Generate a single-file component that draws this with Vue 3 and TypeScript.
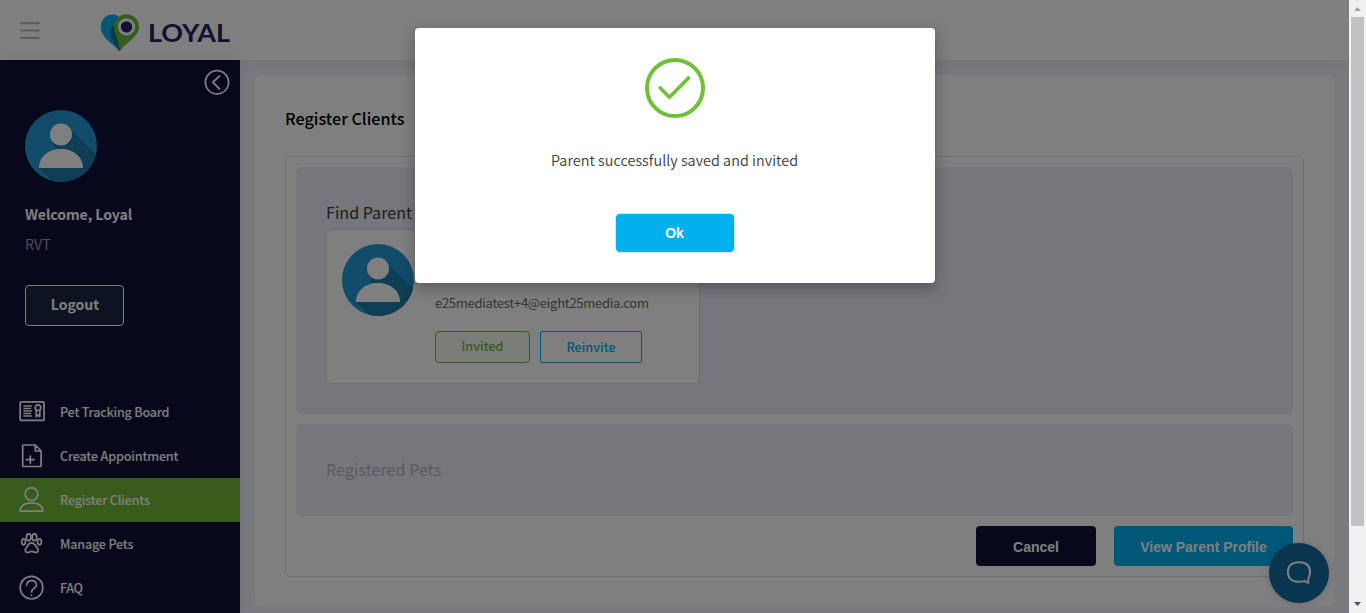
<script setup lang="ts">
import { ref } from 'vue'

interface NavItem {
  icon: 'board' | 'create' | 'client' | 'paw' | 'faq'
  label: string
  width: number
}

const navItems: NavItem[] = [
  { icon: 'board', label: 'Pet Tracking Board', width: 109.5 },
  { icon: 'create', label: 'Create Appointment', width: 118.5 },
  { icon: 'client', label: 'Register Clients', width: 90 },
  { icon: 'paw', label: 'Manage Pets', width: 73.5 },
  { icon: 'faq', label: 'FAQ', width: 23 },
]

const active = ref('Register Clients')
const showModal = ref(true)
</script>

<template>
  <div class="window">
    <div class="page">
      <header class="header">
        <svg class="burger" width="20" height="18" viewBox="0 0 20 18" fill="none" stroke="#a5c3c3" stroke-width="2.200" stroke-linecap="round">
          <path d="M1.200 1.200H18.800M1.200 8.500H18.800M1.200 15.800H18.800" />
        </svg>
        <svg class="logo" width="132" height="40" viewBox="0 0 132 40">
          <path d="M19.500 38.500C14 31 .8 25.500 .8 13.500C.8 6 6.400 1.400 12.700 1.400C16 1.400 18.500 2.800 20 4.500L24 20Z" fill="#00aeef" />
          <path d="M19.800 38.500C14.500 29 9 25 10 19C10.800 15.500 12.500 14 14.500 12L22 26Z" fill="#0077a0" />
          <path d="M19.800 38.500C18.500 25 14 21 14 13.800A12.500 12.500 0 0 1 39 13.800C39 24 26 29 19.800 38.500Z" fill="#70b938" />
          <circle cx="26.500" cy="13.900" r="8.600" fill="#fff" />
          <circle cx="26.500" cy="13.900" r="5.700" fill="#262262" />
          <text x="48" y="29" textLength="82" lengthAdjust="spacingAndGlyphs" class="wordmark">LOYAL</text>
        </svg>
      </header>

      <div class="body">
        <aside class="sidebar">
          <svg class="collapse" width="26" height="26" viewBox="0 0 26 26" fill="none" stroke="#fff" stroke-linecap="round" stroke-linejoin="round">
            <circle cx="13" cy="13.300" r="11.600" stroke-width="1.700" />
            <path d="M15.500 7.100L8.800 13.300L15.500 19.900" stroke-width="1.900" />
          </svg>
          <svg class="avatar" width="72" height="72" viewBox="0 0 72 72">
            <circle cx="36" cy="36" r="36" fill="#2398d4" />
            <path d="M47 21L71 45A36 36 0 0 1 27 70.800L14 58L30 40L28 33Z" fill="#1c7aac" />
            <circle cx="36" cy="24.500" r="11" fill="#fff" />
            <path d="M14 58C14 47 23 39 36 39S58 47 58 58Z" fill="#fff" />
          </svg>
          <div class="welcome">Welcome, Loyal</div>
          <div class="role">RVT</div>
          <button class="logout" type="button">Logout</button>

          <nav class="nav">
            <a v-for="item in navItems" :key="item.label" class="nav-item" :class="{ active: item.label === active }" @click="active = item.label">
              <svg class="nav-icon" width="26" height="26" viewBox="0 0 26 26" fill="none" stroke="#fff" stroke-width="1.700" stroke-linecap="round" stroke-linejoin="round">
                <template v-if="item.icon === 'board'">
                  <rect x="1.200" y="2.900" width="23.800" height="18.500" rx="1" />
                  <path d="M5 6.900H12.500M5 9.400H11.500M5 11.900H12.500M5 14.400H11.500M5 16.900H12.500" stroke-width="1.500" />
                  <circle cx="19" cy="8.700" r="2.800" />
                  <path d="M17.200 11.500V17.600L19 16L20.800 17.600V11.500" />
                </template>
                <template v-else-if="item.icon === 'create'">
                  <path d="M16.300 2H4.500Q3.700 2 3.700 2.800V22.700Q3.700 23.500 4.500 23.500H21.300Q22.100 23.500 22.100 22.700V8ZM16.300 2V8H22.100" />
                  <path d="M11.300 13V20.500M7.500 16.700H15" />
                </template>
                <template v-else-if="item.icon === 'client'">
                  <circle cx="12.500" cy="7.100" r="6.400" />
                  <path d="M1.500 24.200Q1 24.200 1.100 23.300C1.900 18.800 6 15.800 12.500 15.800S23.200 18.800 23.900 23.300Q24 24.200 23.500 24.200Z" />
                </template>
                <template v-else-if="item.icon === 'paw'">
                  <ellipse cx="9.700" cy="6.300" rx="2.300" ry="3.400" />
                  <ellipse cx="15.500" cy="6.300" rx="2.300" ry="3.400" />
                  <ellipse cx="4.600" cy="10.800" rx="1.900" ry="3" />
                  <ellipse cx="20.500" cy="10.800" rx="1.900" ry="3" />
                  <path d="M12.600 11.800C9.500 11.800 9 14.300 7.500 16.500C5.500 18.500 6 21.500 8.300 21.500C10 21.500 10.800 20.300 12.600 20.300S15.500 21.500 17 21.500C19.500 21.500 20 18.500 17.800 16.500C16.300 14.300 15.800 11.800 12.600 11.800Z" />
                </template>
                <template v-else>
                  <circle cx="12.500" cy="12.700" r="11.300" />
                  <path d="M7.700 10C7.700 4.200 17.500 4.200 17.500 10C17.500 13.500 12.600 13 12.600 17M12.600 20.200V20.400" />
                </template>
              </svg>
              <svg class="nav-label" :width="item.width + 2" height="20">
                <text x="0" y="14" :textLength="item.width">{{ item.label }}</text>
              </svg>
            </a>
          </nav>
        </aside>

        <main class="main">
          <section class="panel">
            <h1 class="title">Register Clients</h1>
            <div class="box">
              <div class="find">
                <div class="find-title">Find Parent</div>
                <div class="parent">
                  <svg class="parent-avatar" width="72" height="72" viewBox="0 0 72 72">
                    <circle cx="36" cy="36" r="36" fill="#2398d4" />
                    <path d="M47 21L71 45A36 36 0 0 1 27 70.800L14 58L30 40L28 33Z" fill="#1c7aac" />
                    <circle cx="36" cy="24.500" r="11" fill="#fff" />
                    <path d="M14 58C14 47 23 39 36 39S58 47 58 58Z" fill="#fff" />
                  </svg>
                  <div class="parent-info">
                    <svg class="email" width="216" height="20">
                      <text x="0" y="14" textLength="214">e25mediatest+4@eight25media.com</text>
                    </svg>
                    <div class="actions">
                      <span class="invited">Invited</span>
                      <button class="reinvite" type="button">Reinvite</button>
                    </div>
                  </div>
                </div>
              </div>
              <div class="pets">Registered Pets</div>
              <div class="footer">
                <button class="btn cancel" type="button">Cancel</button>
                <button class="btn view" type="button">View Parent Profile</button>
              </div>
            </div>
          </section>
        </main>
      </div>

      <div class="chat">
        <svg width="26" height="26" viewBox="0 0 26 26" fill="none" stroke="#fff" stroke-width="2" stroke-linejoin="round">
          <path d="M22.300 22.800V18.500C23.800 16.500 24 14.500 24 12C24 5.500 20 2.200 13 2.200S1.900 5.800 1.900 12S6 21.800 13 21.800C15 21.800 17 21.500 18.500 20.800Q20 22.600 22.300 22.800Z" />
        </svg>
      </div>

      <div v-if="showModal" class="overlay">
        <div class="modal">
          <svg class="check" width="60" height="60" viewBox="0 0 60 60" fill="none" stroke="#70bf3a" stroke-linecap="round" stroke-linejoin="round">
            <circle cx="30" cy="30" r="28" stroke-width="4" />
            <path d="M15.200 30L24.500 39.300L43.500 20" stroke-width="3.700" />
          </svg>
          <svg class="message" width="250" height="24">
            <text x="1" y="17" textLength="247">Parent successfully saved and invited</text>
          </svg>
          <button class="ok" type="button" @click="showModal = false">Ok</button>
        </div>
      </div>
    </div>

    <div class="scrollbar">
      <svg width="17" height="17" viewBox="0 0 17 17"><path d="M5 11L8.500 7L12 11Z" fill="#a3a3a3" /></svg>
      <div class="thumb"></div>
      <svg width="17" height="17" viewBox="0 0 17 17"><path d="M5 6L8.500 10L12 6Z" fill="#505050" /></svg>
    </div>
  </div>
</template>

<style>
body {
  margin: 0;
  overflow: hidden;
}
</style>

<style scoped>
* {
  box-sizing: border-box;
}
.window {
  display: flex;
  width: 1366px;
  height: 613px;
  overflow: hidden;
  font-family: "Noto Sans CJK SC", "Noto Sans", sans-serif;
}
svg {
  display: block;
  flex: none;
}
button {
  font-family: "Liberation Sans", Arial, sans-serif;
  font-weight: 700;
  padding: 0;
}
.page {
  position: relative;
  display: flex;
  flex-direction: column;
  width: 1349px;
  height: 613px;
  overflow: hidden;
  background: #f3f5fa;
}
.header {
  position: relative;
  z-index: 1;
  display: flex;
  flex: none;
  height: 60px;
  background: #fff;
  box-shadow: 0 0 20px rgba(0, 0, 0, 0.08);
}
.burger {
  margin: 22px 0 0 20px;
}
.logo {
  margin: 13px 0 0 60px;
}
.wordmark {
  font-family: Lato, sans-serif;
  font-size: 25.500px;
  font-weight: 700;
  fill: #262262;
}
.body {
  display: flex;
  flex: 1;
  min-height: 0;
}
.sidebar {
  position: relative;
  z-index: 2;
  display: flex;
  flex-direction: column;
  width: 240px;
  flex: none;
  color: #fff;
  background: #111139;
  box-shadow: 0 0 20px rgba(0, 0, 0, 0.06);
}
.collapse {
  margin: 9px 10px 0 auto;
}
.avatar {
  margin: 15px 0 0 25px;
}
.welcome {
  margin: 22px 0 0 25px;
  font-size: 14.200px;
  font-weight: 700;
  line-height: 20px;
  letter-spacing: -0.12px;
}
.role {
  margin: 10px 0 0 25px;
  font-size: 14.200px;
  line-height: 20px;
  color: #9a9aa2;
}
.logout {
  width: 99px;
  height: 41px;
  margin: 31px 0 0 25px;
  border: 1px solid #fff;
  border-radius: 4px;
  background: #1a2640;
  color: #fff;
  font-family: "Noto Sans CJK SC", sans-serif;
  font-size: 14px;
  line-height: 35px;
  padding: 0 0 2px 1px;
}
.nav {
  margin-top: 64px;
}
.nav-item {
  display: flex;
  align-items: center;
  height: 44px;
  padding-left: 19px;
}
.nav-item.active {
  background: #70b938;
}
.nav-label {
  margin: 1px 0 0 15px;
}
.nav-label text {
  font-size: 12.600px;
  font-weight: 500;
  fill: #fff;
}
.main {
  flex: 1;
  padding: 15px;
}
.panel {
  height: 532px;
  padding: 30px;
  border-radius: 5px;
  background: #fff;
}
.title {
  margin: 0 0 37px;
  font-size: 16.200px;
  font-weight: 500;
  line-height: 26px;
  height: 14px;
  color: #000;
}
.box {
  height: 421px;
  padding: 10px;
  border: 1px solid #dcdee2;
  border-radius: 5px;
}
.find {
  height: 247px;
  padding: 34px 30px 0;
  border-radius: 5px;
  background: #edeff8;
}
.find-title {
  height: 28px;
  font-size: 16.100px;
  line-height: 22px;
  color: #3c3c48;
}
.parent {
  display: flex;
  width: 374px;
  height: 155px;
  border: 1px solid #dcdee2;
  border-radius: 5px;
  background: #fff;
}
.parent-avatar {
  margin: 14px 0 0 15px;
}
.parent-info {
  margin: 64px 0 0 21px;
}
.email text {
  font-size: 13px;
  fill: #6a6a6a;
}
.actions {
  display: flex;
  gap: 10px;
  margin-top: 17px;
}
.invited,
.reinvite {
  width: 95px;
  height: 32px;
  border: 1px solid #70b938;
  border-radius: 4px;
  background: #f5faf0;
  color: #70b938;
  font-family: "Noto Sans CJK SC", sans-serif;
  font-size: 12.600px;
  font-weight: 500;
  line-height: 27px;
  text-align: center;
}
.reinvite {
  width: 102px;
  padding-bottom: 2px;
  border-color: #00aeef;
  border-radius: 2px;
  background: #fff;
  color: #00aeef;
}
.pets {
  height: 92px;
  margin-top: 10px;
  padding: 0 30px;
  border-radius: 5px;
  background: #edeff8;
  color: #b5b7c0;
  font-size: 16.200px;
  line-height: 90px;
}
.footer {
  display: flex;
  justify-content: flex-end;
  gap: 18px;
  margin-top: 10px;
}
.btn {
  height: 40px;
  border: 0;
  border-radius: 4px;
  color: #fff;
  font-size: 14px;
  line-height: 42px;
}
.cancel {
  width: 120px;
  background: #111139;
}
.view {
  width: 179px;
  background: #00aeef;
}
.chat {
  position: absolute;
  z-index: 3;
  right: 20px;
  bottom: 10px;
  display: flex;
  align-items: center;
  justify-content: center;
  width: 60px;
  height: 60px;
  border-radius: 50%;
  background: #146b9c;
  box-shadow: 0 1px 8px rgba(0, 0, 0, 0.16);
}
.overlay {
  position: absolute;
  z-index: 10;
  inset: 0;
  display: flex;
  align-items: flex-start;
  justify-content: center;
  padding-top: 28px;
  background: rgba(0, 0, 0, 0.5);
}
.modal {
  display: flex;
  flex-direction: column;
  align-items: center;
  width: 520px;
  height: 255px;
  padding-top: 30px;
  border-radius: 4px;
  background: #fff;
  box-shadow: 0 5px 15px rgba(0, 0, 0, 0.3);
}
.message {
  margin-top: 31px;
}
.message text {
  font-size: 14.400px;
  font-weight: 350;
  fill: #3c3c3c;
}
.ok {
  width: 120px;
  height: 40px;
  margin-top: 40px;
  padding: 0;
  border: 1px solid #d8e6ee;
  border-radius: 5px;
  background: #00b0ef;
  color: #fff;
  font-size: 14px;
}
.scrollbar {
  display: flex;
  flex-direction: column;
  align-items: center;
  justify-content: space-between;
  width: 17px;
  background: #f1f1f1;
}
.thumb {
  width: 13px;
  height: 509px;
  margin-bottom: auto;
  background: #c1c1c1;
}
</style>
